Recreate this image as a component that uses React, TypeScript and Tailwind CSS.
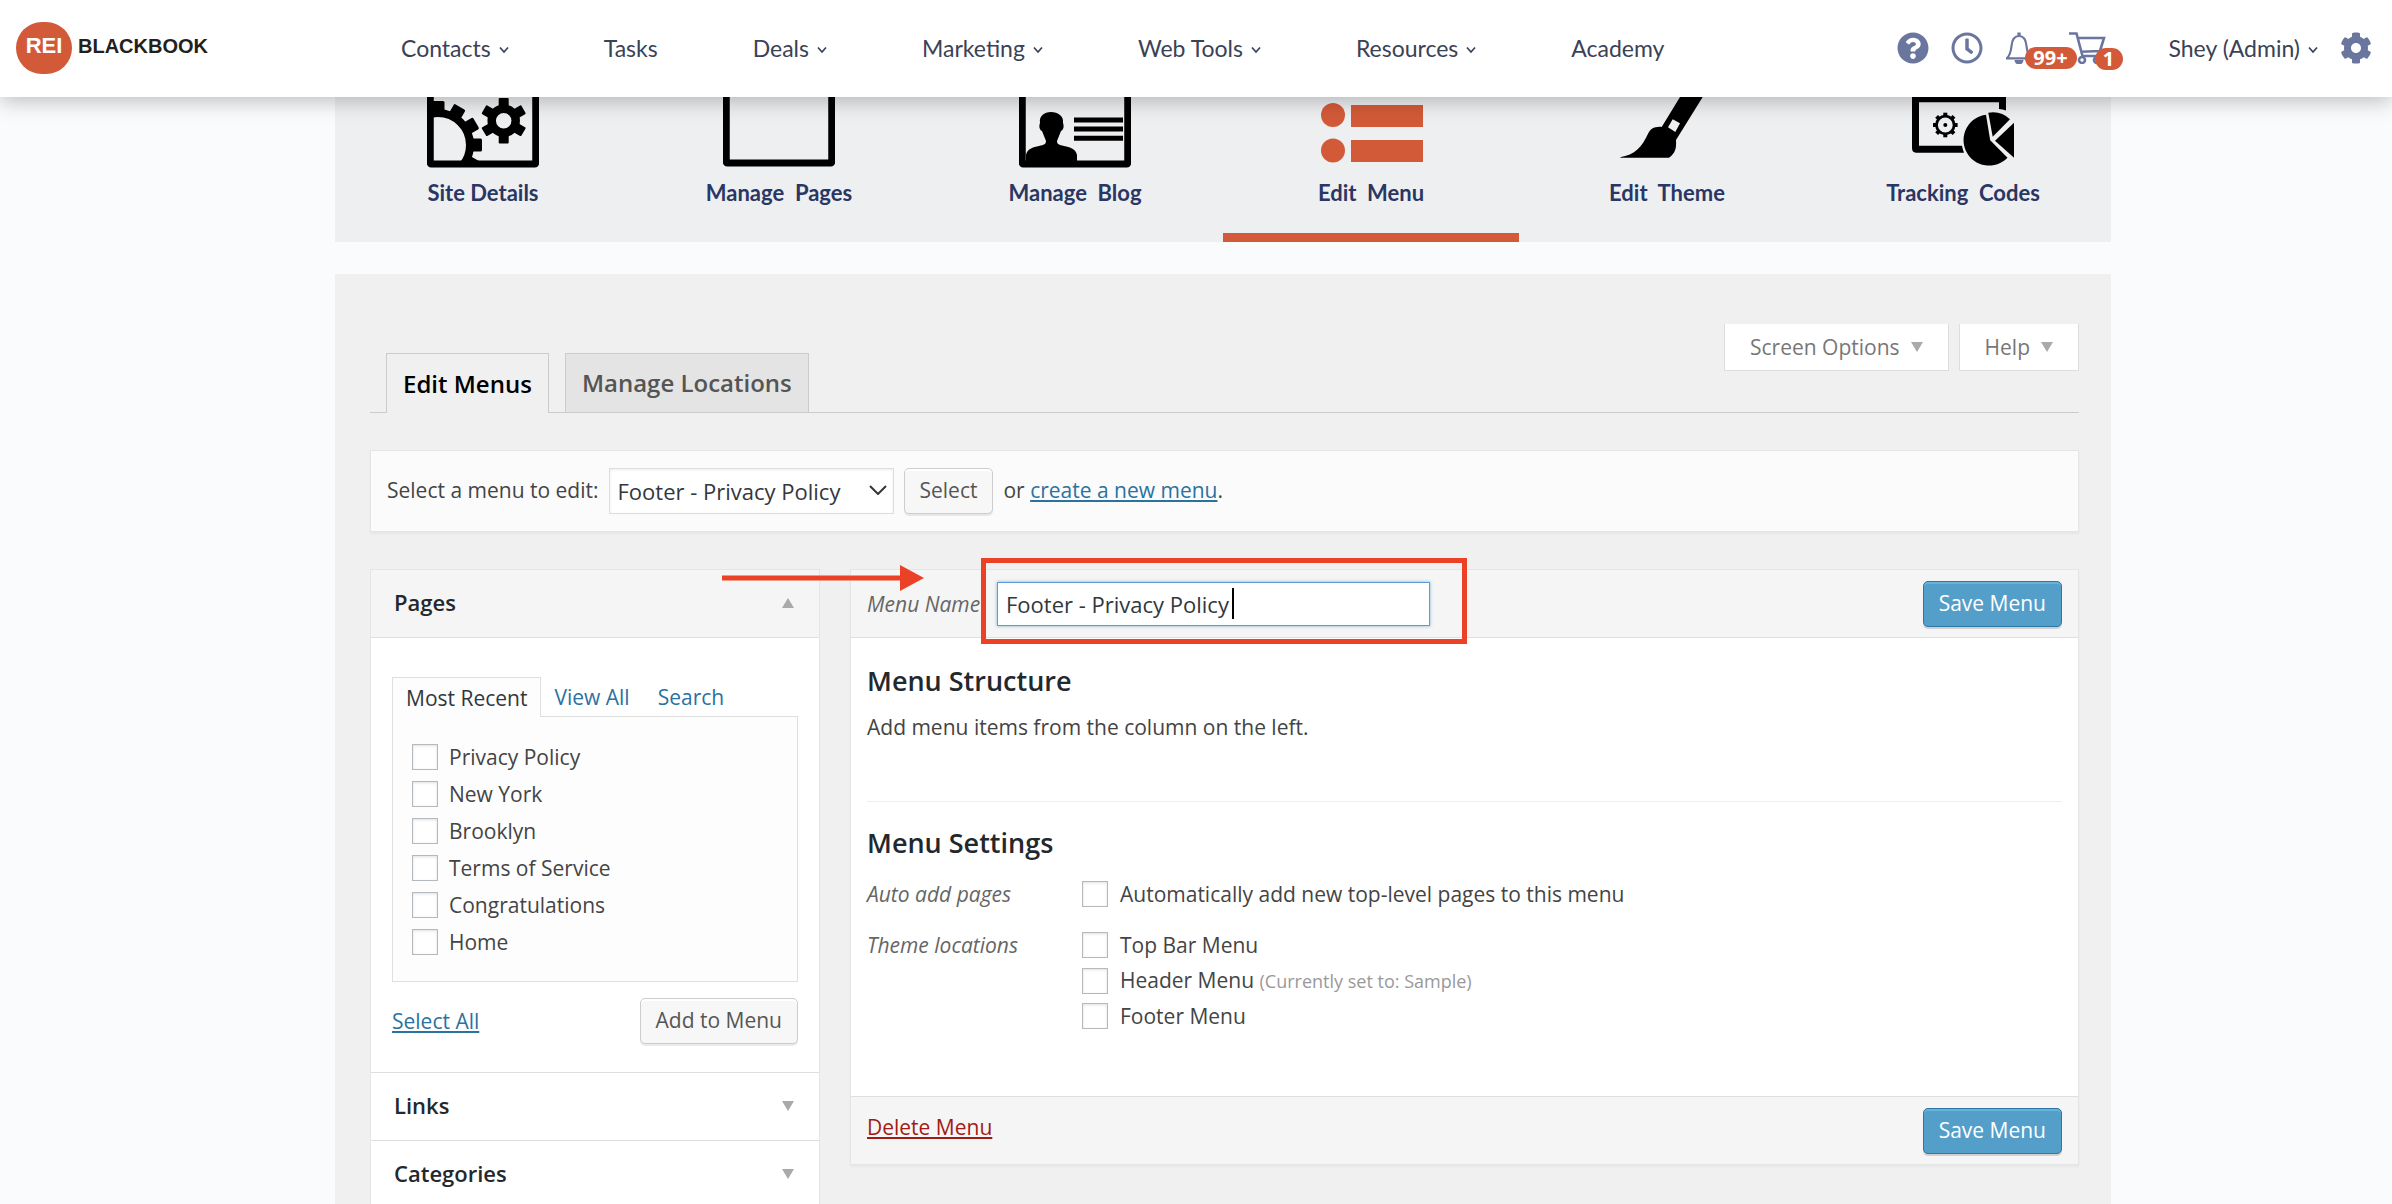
import type { ReactNode } from "react";
import { FaCog, FaQuestionCircle, FaRegClock } from "react-icons/fa";

const navItems = [
  { label: "Contacts", menu: true },
  { label: "Tasks", menu: false },
  { label: "Deals", menu: true },
  { label: "Marketing", menu: true },
  { label: "Web Tools", menu: true },
  { label: "Resources", menu: true },
  { label: "Academy", menu: false },
];

const recentPages = ["Privacy Policy", "New York", "Brooklyn", "Terms of Service", "Congratulations", "Home"];

const checkboxClass =
  "size-[26px] shrink-0 appearance-none border border-[#b4b9be] bg-white shadow-[inset_0_1px_3px_rgba(0,0,0,0.12)]";

const buttonClass =
  "rounded-[5px] border border-[#ccc] bg-[#f7f7f7] pb-0.5 text-[21px] leading-[28px] text-[#555] shadow-[inset_0_2px_0_#fff,0_2px_0_rgba(0,0,0,0.08)]";

function Chevron() {
  return (
    <svg viewBox="0 0 10 8" className="mt-1 h-2 w-[10px]" fill="none" stroke="currentColor" strokeWidth="1.7">
      <path d="M1 1.5 5 6 9 1.5" />
    </svg>
  );
}

function BellIcon() {
  return (
    <svg viewBox="0 0 32 32" className="size-8" fill="none" stroke="currentColor" strokeWidth="2.2">
      <path d="M14 3.5v-3" strokeWidth="3.4" />
      <path d="M1 26.300h25M2 26c3.500-3 4-7 4.500-12 .6-6.500 3.500-10 7.500-10s6.900 3.500 7.500 10c.5 5 1 9 4.500 12" />
      <path d="M9.500 28h9a4.500 4.500 0 0 1-9 0z" fill="currentColor" stroke="none" />
    </svg>
  );
}

function CartIcon() {
  return (
    <svg viewBox="0 0 38 32" className="h-8 w-[38px]" fill="none" stroke="currentColor" strokeWidth="2.600">
      <path d="M0 1.500h7.500L13.500 24H30M9 6h26l-4 13-19 .800" />
      <circle cx="13" cy="28" r="3" />
      <circle cx="28" cy="28" r="3" />
    </svg>
  );
}

const bigTeeth = [-90, -60, -30, 0, 30];
const smallTeeth = [30, 90, 150, 210, 270, 330];
const tinyTeeth = [0, 45, 90, 135, 180, 225, 270, 315];

function Frame({ bottom, children }: { bottom: number; children?: ReactNode }) {
  return (
    <svg viewBox="0 0 112 72" className="h-[72px] w-28">
      <rect x="3.250" y="-40" width="105.500" height={bottom + 36} rx="1" fill="none" stroke="#000" strokeWidth="7" />
      {children}
    </svg>
  );
}

function SiteDetailsIcon() {
  return (
    <Frame bottom={71}>
      <clipPath id="frame-clip">
        <rect x="0" y="0" width="112" height="66" />
      </clipPath>
      <g clipPath="url(#frame-clip)">
        <circle cx="11" cy="48" r="32" fill="none" stroke="#000" strokeWidth="8" />
        {bigTeeth.map((a) => (
          <rect key={a} x="43" y="41.500" width="12" height="13" rx="1.500" transform={`rotate(${a} 11 48)`} />
        ))}
      </g>
      <circle cx="76.700" cy="23.700" r="12" fill="none" stroke="#000" strokeWidth="8.500" />
      {smallTeeth.map((a) => (
        <rect key={a} x="91" y="18.700" width="8.500" height="10" rx="1" transform={`rotate(${a} 76.700 23.700)`} />
      ))}
    </Frame>
  );
}

function BlogIcon() {
  return (
    <Frame bottom={71}>
      <path d="M7 66V58c1-6 7-8 13-9 5-1 7-2 7-5l-4-10c-3-1-3-6-2-8-1-7 4-11 11-11s13 4 12 11c1 2 1 7-2 8l-4 10c0 3 2 4 7 5 6 1 12 3 13 9v8z" />
      <path d="M55 20.500h49v5H55zM55 29.500h49v5H55zM55 38.700h49v5H55z" />
    </Frame>
  );
}

function MenuIcon() {
  return (
    <svg viewBox="0 0 112 72" className="h-[72px] w-28" fill="#d35a38">
      <circle cx="18" cy="18" r="12" />
      <circle cx="18" cy="53.500" r="12" />
      <path d="M36 8h72v22H36zM36 43h72v22H36z" />
    </svg>
  );
}

function BrushIcon() {
  return (
    <svg viewBox="0 0 112 72" className="h-[72px] w-28">
      <path d="M9 60.300C24 58 31 50 37.300 36.300 39 32 44 29 50.700 29.900L69 0H91.700L65 43C65.500 51 64.500 56 58 60.800H10z" />
      <path d="M61.700 22.300 69 26.300 64.300 35 57 30.300z" fill="#eeeff1" />
    </svg>
  );
}

function TrackingIcon() {
  return (
    <svg viewBox="0 0 112 72" className="h-[72px] w-28">
      <path d="M5 0H99V13.500Q96 12 92 12V5.300H12V48.700H55Q55.500 52 57 55.700H9Q5 55.500 5 51z" />
      <circle cx="38.300" cy="28" r="8.800" fill="none" stroke="#000" strokeWidth="2.800" />
      {tinyTeeth.map((a) => (
        <rect key={a} x="47" y="26" width="3.600" height="4" transform={`rotate(${a} 38.300 28)`} />
      ))}
      <circle cx="38.300" cy="28" r="2" />
      <path d="M79 17.800 83.200 43.200 100.500 60.700A25.500 25.500 0 1 1 79 17.800z" />
      <path d="M81.300 15.700Q94 13.500 103 22.300L85.700 39.700z" />
      <path d="M107 25.700V60.700L88 43.700z" />
    </svg>
  );
}

const tiles = [
  { label: "Site Details", icon: <SiteDetailsIcon /> },
  { label: "Manage  Pages", icon: <Frame bottom={70} /> },
  { label: "Manage  Blog", icon: <BlogIcon /> },
  { label: "Edit  Menu", icon: <MenuIcon />, active: true },
  { label: "Edit  Theme", icon: <BrushIcon /> },
  { label: "Tracking  Codes", icon: <TrackingIcon /> },
];

function Header() {
  return (
    <header className="relative z-10 flex h-[97px] items-center bg-white pb-0.5 pl-4 pr-5 font-['Lato',sans-serif] text-[23px] leading-[28px] text-[#3a4256] shadow-[0_4px_20px_rgba(0,0,0,0.25)]">
      <a href="#" className="flex w-[385px] shrink-0 items-center gap-1.5 font-['Liberation_Sans',sans-serif] font-bold">
        <span className="flex h-[52px] w-14 items-center justify-center rounded-full bg-[#d35a38] pb-1 text-[22px] text-white">REI</span>
        <span className="pb-1 text-[20px] text-[#231f20]">BLACKBOOK</span>
      </a>
      <nav className="flex gap-[95px]">
        {navItems.map((item) => (
          <a key={item.label} href="#" className="flex items-center gap-2 whitespace-nowrap">
            {item.label}
            {item.menu && <Chevron />}
          </a>
        ))}
      </nav>
      <div className="ml-auto flex items-center text-[#6a769e]">
        <button type="button" aria-label="Help">
          <FaQuestionCircle className="size-8" />
        </button>
        <button type="button" aria-label="History" className="ml-[22px]">
          <FaRegClock className="size-8" />
        </button>
        <button type="button" aria-label="Notifications" className="relative ml-[22px]">
          <BellIcon />
          <span className="absolute left-5 top-[15px] z-10 flex h-[22px] w-[52px] items-center justify-center rounded-full bg-[#d35a38] font-['Open_Sans',sans-serif] text-[20px] font-bold leading-[22px] text-white">
            99+
          </span>
        </button>
        <button type="button" aria-label="Cart" className="relative ml-8">
          <CartIcon />
          <span className="absolute left-[26px] top-4 flex h-[22px] w-7 items-center justify-center rounded-full bg-[#d35a38] font-['Open_Sans',sans-serif] text-[20px] font-bold leading-[22px] text-white">
            1
          </span>
        </button>
        <button type="button" className="ml-[62px] flex items-center gap-2 whitespace-nowrap text-[#3a4256]">
          Shey (Admin)
          <Chevron />
        </button>
        <button type="button" aria-label="Settings" className="ml-[22px]">
          <FaCog className="size-8" />
        </button>
      </div>
    </header>
  );
}

function SiteTabs() {
  return (
    <nav className="grid h-[145px] grid-cols-6 bg-[#eeeff1]">
      {tiles.map((tile) => (
        <a
          key={tile.label}
          href="#"
          className={
            "flex flex-col items-center border-b-[9px] font-['Lato',sans-serif] text-[22px] font-bold text-[#2a3663] " +
            (tile.active ? "border-[#d35a38]" : "border-transparent")
          }
        >
          {tile.icon}
          <span className="mt-2.5 whitespace-pre leading-[28px]">{tile.label}</span>
        </a>
      ))}
    </nav>
  );
}

function Triangle({ up }: { up?: boolean }) {
  return (
    <svg viewBox="0 0 12 10" className="h-2.5 w-3" fill="#aaa">
      <path d={up ? "M0 10h12L6 0z" : "M0 0h12L6 10z"} />
    </svg>
  );
}

function PagesColumn() {
  return (
    <aside className="w-[450px] shrink-0 border border-[#e5e5e5] bg-white">
      <h3 className="flex h-[68px] items-center justify-between border-b border-[#dfdfdf] bg-[#f5f5f5] pb-0.5 pl-[23px] pr-[25px] text-[22px] font-semibold text-[#23282d]">
        Pages
        <Triangle up />
      </h3>
      <div className="border-b border-[#dfdfdf] px-[21px] pb-7 pt-[39px]">
        <div className="flex text-[21px] leading-[28px] text-[#2a72a0]">
          <button type="button" className="relative z-10 -mb-px h-10 border border-b-0 border-[#dfdfdf] bg-[#fdfdfd] px-[13px] text-[#32373c]">
            Most Recent
          </button>
          <button type="button" className="ml-[13px]">View All</button>
          <button type="button" className="ml-7">Search</button>
        </div>
        <ul className="flex h-[266px] flex-col gap-[11px] border border-[#dfdfdf] bg-[#fdfdfd] pl-[19px] pt-[27px]">
          {recentPages.map((page) => (
            <li key={page}>
              <label className="flex items-center gap-[11px] text-[21px] leading-[26px] text-[#444]">
                <input type="checkbox" className={checkboxClass} />
                {page}
              </label>
            </li>
          ))}
        </ul>
        <div className="mt-4 flex items-center justify-between">
          <a href="#" className="text-[21px] leading-[28px] text-[#2a72a0] underline">Select All</a>
          <button type="button" className={"h-[46px] px-[15px] " + buttonClass}>Add to Menu</button>
        </div>
      </div>
      {["Links", "Categories"].map((title) => (
        <h3
          key={title}
          className="flex h-[68px] items-center justify-between border-b border-[#dfdfdf] pb-0.5 pl-[23px] pr-[25px] text-[22px] font-semibold text-[#23282d]"
        >
          {title}
          <Triangle />
        </h3>
      ))}
    </aside>
  );
}

function SaveButton() {
  return (
    <button
      type="button"
      className="h-[46px] rounded-[5px] border border-[#2e76a4] bg-[#539fca] px-[15px] pb-0.5 text-[21px] leading-[28px] text-white shadow-[inset_0_2px_0_rgba(120,200,230,0.5),0_2px_0_rgba(0,0,0,0.15)]"
    >
      Save Menu
    </button>
  );
}

function MenuEditor() {
  return (
    <section className="min-w-0 flex-1 border border-[#e5e5e5] bg-white shadow-[0_2px_2px_rgba(0,0,0,0.04)]">
      <div className="relative flex h-[68px] items-center border-b border-[#dfdfdf] bg-[#f5f5f5] px-4">
        <label htmlFor="menu-name" className="w-[130px] text-[21px] italic leading-[28px] text-[#666]">
          Menu Name
        </label>
        <div className="relative">
          <input
            id="menu-name"
            type="text"
            defaultValue="Footer - Privacy Policy"
            className="h-11 w-[433px] border border-[#5b9dd9] bg-white px-2 text-[22px] leading-[28px] text-[#32373c] shadow-[0_0_3px_rgba(30,140,190,0.6)] outline-none"
          />
          <span className="absolute left-[235px] top-1.5 h-[31px] w-0.5 bg-black" />
        </div>
        <div className="ml-auto">
          <SaveButton />
        </div>
        {/* callout around the name field, with the arrow leading to it */}
        <div className="pointer-events-none absolute -top-3 left-[130px] h-[86px] w-[486px] border-[5px] border-[#eb4127]" />
        <svg viewBox="0 0 202 26" className="pointer-events-none absolute -top-[5px] -left-[129px] h-[26px] w-[202px]" fill="#eb4127">
          <path d="M0 10.500h178V0l24 13-24 13V15.500H0z" />
        </svg>
      </div>

      <div className="px-4 pb-[67px] pt-[23px]">
        <h3 className="text-[27px] font-semibold leading-[40px] text-[#23282d]">Menu Structure</h3>
        <p className="mt-3 text-[21px] leading-[28px] text-[#444]">Add menu items from the column on the left.</p>
        <hr className="mt-[60px] border-[#eee]" />
        <h3 className="mt-[21px] text-[27px] font-semibold leading-[40px] text-[#23282d]">Menu Settings</h3>
        <div className="mt-[18px] grid grid-cols-[215px_1fr] gap-y-[25px] text-[21px] leading-[26px] text-[#444]">
          <span className="italic text-[#666]">Auto add pages</span>
          <label className="flex items-center gap-3">
            <input type="checkbox" className={checkboxClass} />
            Automatically add new top-level pages to this menu
          </label>
          <span className="italic text-[#666]">Theme locations</span>
          <div className="flex flex-col gap-[9px]">
            <label className="flex items-center gap-3">
              <input type="checkbox" className={checkboxClass} />
              Top Bar Menu
            </label>
            <label className="flex items-center gap-3">
              <input type="checkbox" className={checkboxClass} />
              <span>
                Header Menu <span className="text-[18px] text-[#999]">(Currently set to: Sample)</span>
              </span>
            </label>
            <label className="flex items-center gap-3">
              <input type="checkbox" className={checkboxClass} />
              Footer Menu
            </label>
          </div>
        </div>
      </div>

      <div className="flex h-[68px] items-center justify-between border-t border-[#dfdfdf] bg-[#f5f5f5] px-4">
        <a href="#" className="pb-2 text-[21px] leading-[28px] text-[#a01b14] underline">Delete Menu</a>
        <SaveButton />
      </div>
    </section>
  );
}

export default function App() {
  return (
    <div className="h-screen overflow-hidden bg-[#fafbfd] font-['Open_Sans',sans-serif]">
      <Header />
      <main className="pl-[335px] pr-[281px]">
        <SiteTabs />
        <div className="mt-8 min-h-screen bg-[#f0f0f0] pb-10 pl-[35px] pr-8 pt-[50px]">
          <div className="flex justify-end gap-2.5 text-[21px] leading-[28px] text-[#777]">
            <button type="button" className="flex h-[47px] items-center gap-[11px] border border-t-0 border-[#ddd] bg-white px-[25px]">
              Screen Options
              <Triangle />
            </button>
            <button type="button" className="flex h-[47px] items-center gap-[11px] border border-t-0 border-[#ddd] bg-white px-[25px]">
              Help
              <Triangle />
            </button>
          </div>
          <div className="-mt-[18px] flex gap-4 border-b border-[#ccc] pl-4 text-[24px] font-semibold leading-[32px]">
            <button type="button" className="-mb-px h-[60px] border border-b-0 border-[#ccc] bg-[#f0f0f0] px-4 text-black">
              Edit Menus
            </button>
            <button type="button" className="-mb-px h-[60px] border border-[#ccc] bg-[#e4e4e4] px-4 text-[#555]">
              Manage Locations
            </button>
          </div>

          <form className="mt-[37px] flex h-[82px] items-center border border-[#e5e5e5] bg-[#fbfbfb] px-4 text-[21px] leading-[28px] text-[#444] shadow-[0_2px_2px_rgba(0,0,0,0.04)]">
            <label htmlFor="menu-select" className="pb-0.5">Select a menu to edit:</label>
            <div className="relative ml-2.5 text-[#32373c]">
              <select id="menu-select" className="h-[46px] w-[285px] appearance-none border border-[#ddd] bg-white px-2 text-[22px] leading-[28px] shadow-[inset_0_1px_3px_rgba(0,0,0,0.08)]">
                <option>Footer - Privacy Policy</option>
              </select>
              <svg viewBox="0 0 18 10" className="pointer-events-none absolute right-[7px] top-[17px] h-2.5 w-[18px]" fill="none" stroke="currentColor" strokeWidth="2">
                <path d="M1 1 9 9 17 1" />
              </svg>
            </div>
            <button type="button" className={"ml-2.5 h-[46px] px-[15px] " + buttonClass}>Select</button>
            <span className="ml-2.5 pb-0.5">
              or <a href="#" className="text-[#2a72a0] underline">create a new menu</a>.
            </span>
          </form>

          <div className="mt-[37px] flex items-start gap-[30px]">
            <PagesColumn />
            <MenuEditor />
          </div>
        </div>
      </main>
    </div>
  );
}
